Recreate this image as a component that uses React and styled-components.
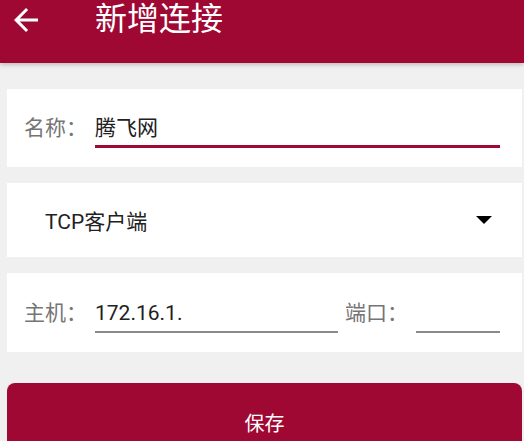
import React from "react";
import styled, { createGlobalStyle } from "styled-components";
import { MdArrowBack } from "react-icons/md";

const GlobalStyle = createGlobalStyle`
  body {
    margin: 0;
    background: #f0f0f0;
    font-family: Roboto, "Noto Sans CJK SC", sans-serif;
  }
`;

const Page = styled.div`
  width: 524px;
  min-height: 441px;
  overflow: hidden;
`;

const Header = styled.div`
  display: flex;
  align-items: center;
  height: 63px;
  box-sizing: border-box;
  padding: 0 0 24px 8px;
  background: #9e0833;
  color: white;
  box-shadow: 0 2px 4px rgba(0, 0, 0, 0.2);
`;

const BackButton = styled.div`
  display: flex;
  width: 36px;
  height: 36px;
`;

const Title = styled.h1`
  margin: 0 0 0 51px;
  font-size: 32px;
  font-weight: 400;
  line-height: 39px;
`;

const Content = styled.div`
  display: flex;
  flex-direction: column;
  padding: 26px 2px 0 7px;
`;

const Card = styled.div`
  display: flex;
  align-items: center;
  height: ${(p) => p.height}px;
  margin-bottom: ${(p) => p.gap}px;
  padding: 0 22px 0 ${(p) => p.left || 17}px;
  background: white;
`;

const Label = styled.span`
  flex: none;
  margin: 0 8px 0 ${(p) => p.offset || 0}px;
  font-size: 21px;
  line-height: 24px;
  color: #757575;
`;

const Field = styled.div`
  flex: ${(p) => (p.width ? "none" : 1)};
  width: ${(p) => (p.width ? `${p.width}px` : "auto")};
  height: 24px;
  padding: ${(p) => (p.active ? "8px 0 5px" : "8px 0 6px")};
  border-bottom: ${(p) => (p.active ? "3px solid #9e0833" : "2px solid #8a8a8a")};
  font-size: 21px;
  line-height: 24px;
  color: #212121;
`;

const SelectText = styled.span`
  flex: 1;
  font-size: 21px;
  color: #212121;
`;

const SaveButton = styled.button`
  height: 78px;
  border: none;
  border-radius: 8px;
  background: #9e0833;
  color: white;
  font-family: inherit;
  font-size: 20px;
  padding: 0;
`;

const App = () => {
  return (
    <Page>
      <GlobalStyle />
      <Header>
        <BackButton>
          <MdArrowBack size={36} />
        </BackButton>
        <Title>新增连接</Title>
      </Header>
      <Content>
        <Card height={78} gap={16}>
          <Label>名称：</Label>
          <Field active>腾飞网</Field>
        </Card>
        <Card height={74} gap={16} left={38}>
          <SelectText>TCP客户端</SelectText>
          <svg width="16" height="8" viewBox="0 0 16 8" style={{ marginRight: 8 }}>
            <path d="M0 0h16L8 8z" fill="#000" />
          </svg>
        </Card>
        <Card height={79} gap={31}>
          <Label>主机：</Label>
          <Field width={243}>172.16.1.</Field>
          <Label offset={7}>端口：</Label>
          <Field />
        </Card>
        <SaveButton>保存</SaveButton>
      </Content>
    </Page>
  );
};

export default App;
